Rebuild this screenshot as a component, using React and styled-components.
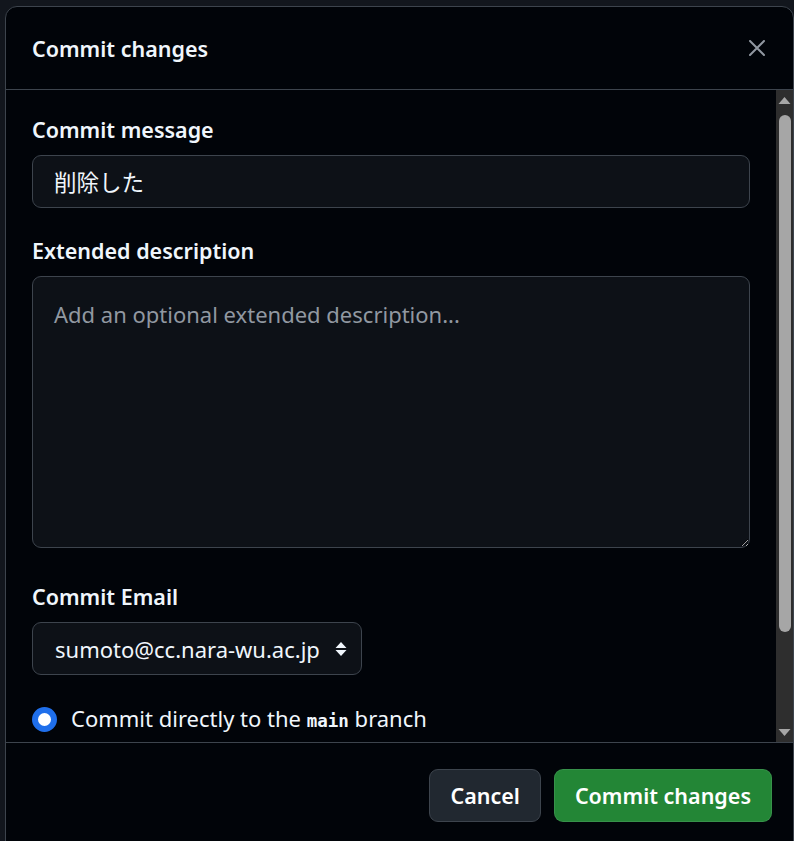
import styled, { createGlobalStyle } from 'styled-components'

const GlobalStyle = createGlobalStyle`
    html, body {
        margin: 0;
        padding: 0;
        overflow: hidden;
        background: #12161d;
        font-family: "Noto Sans", "Noto Sans CJK JP", sans-serif;
        color: #f0f6fc;
    }
`

const Page = styled.div`
    padding: 6px 0 0 5px;
    height: 841px;
    box-sizing: border-box;
`
const Dialog = styled.div`
    width: 789px;
    height: 860px;
    box-sizing: border-box;
    background: #010409;
    border: 1px solid #3d444d;
    border-radius: 12px;
    display: flex;
    flex-direction: column;
    overflow: hidden;
`
const Header = styled.div`
    height: 82px;
    flex-shrink: 0;
    display: flex;
    align-items: center;
    justify-content: space-between;
    padding: 0 22px 0 26px;
    border-bottom: 1px solid #3d444d;
`
const Title = styled.h1`
    margin: 0;
    font-size: 21.5px;
    font-weight: 600;
`
const CloseButton = styled.button`
    background: none;
    border: none;
    padding: 6px;
    cursor: pointer;
    display: flex;
`
const BodyRow = styled.div`
    height: 652px;
    flex-shrink: 0;
    display: flex;
`
const Content = styled.div`
    flex: 1;
    overflow: hidden;
    padding: 25px 26px;
    display: flex;
    flex-direction: column;
`
const ScrollTrack = styled.div`
    width: 17px;
    background: #2e2e2e;
    display: flex;
    flex-direction: column;
    align-items: center;
`
const ScrollArrow = styled.div`
    height: 20px;
    display: flex;
    align-items: center;
    justify-content: center;
    margin-top: ${props => props.bottom ? 'auto' : '0'};
`
const ScrollThumb = styled.div`
    width: 12px;
    height: 517px;
    margin-top: 5px;
    border-radius: 6px;
    background: #a6a6a6;
`
const Field = styled.div`
    display: flex;
    flex-direction: column;
    margin-bottom: ${props => props.gap || 24}px;
`
const Label = styled.label`
    font-size: 21.5px;
    font-weight: 600;
    line-height: 30px;
    margin-bottom: 10px;
`
const TextInput = styled.input`
    height: 53px;
    box-sizing: border-box;
    background: #0d1117;
    border: 1px solid #3d444d;
    border-radius: 9px;
    padding: 0 21px;
    font-family: "Noto Sans", "Noto Sans CJK JP", sans-serif;
    font-size: 22.5px;
    color: #f0f6fc;
    outline: none;
`
const TextArea = styled.textarea`
    height: 272px;
    box-sizing: border-box;
    background: #0d1117;
    border: 1px solid #3d444d;
    border-radius: 9px;
    padding: 21px 21px;
    font-family: "Noto Sans", sans-serif;
    font-size: 22px;
    line-height: 1.5;
    color: #f0f6fc;
    outline: none;
    resize: vertical;
    color-scheme: dark;
    &::placeholder {
        color: #9198a1;
    }
`
const Select = styled.div`
    align-self: flex-start;
    height: 53px;
    box-sizing: border-box;
    display: flex;
    align-items: center;
    gap: 15px;
    background: #0d1117;
    border: 1px solid #3d444d;
    border-radius: 9px;
    padding: 0 14px 0 22px;
    font-size: 22px;
`
const RadioRow = styled.label`
    display: flex;
    align-items: center;
    gap: 14px;
    font-size: 22px;
    line-height: 30px;
    flex-shrink: 0;
`
const Radio = styled.span`
    width: 25px;
    height: 25px;
    box-sizing: border-box;
    border-radius: 50%;
    flex-shrink: 0;
    background: ${props => props.checked ? '#ffffff' : 'transparent'};
    border: ${props => props.checked ? '6px solid #1f6feb' : '1px solid #9198a1'};
`
const Code = styled.code`
    font-family: "DejaVu Sans Mono", "Liberation Mono", monospace;
    font-size: 17.5px;
    font-weight: 700;
`
const Footer = styled.div`
    flex-shrink: 0;
    display: flex;
    justify-content: flex-end;
    gap: 13px;
    padding: 26px 21px;
    border-top: 1px solid #3d444d;
`
const Button = styled.button`
    height: 53px;
    padding: 0 20px;
    border-radius: 9px;
    font-family: "Noto Sans", sans-serif;
    font-size: 21.5px;
    font-weight: 600;
    color: #ffffff;
    cursor: pointer;
    background: ${props => props.primary ? '#238636' : '#212830'};
    border: 1px solid ${props => props.primary ? 'rgba(240, 246, 252, 0.1)' : '#3d444d'};
`

const CloseIcon = () => (
    <svg width="16" height="16" viewBox="0 0 16 16">
        <path d="M1 1 L15 15 M15 1 L1 15" stroke="#9198a1" strokeWidth="2" strokeLinecap="round" />
    </svg>
)

const SortIcon = () => (
    <svg width="12" height="16" viewBox="0 0 12 16">
        <path d="M6 1 L11.5 7 L0.5 7 Z M0.5 9 L11.5 9 L6 15 Z" fill="#f0f6fc" />
    </svg>
)

const ArrowIcon = ({ down }) => (
    <svg width="13" height="9" viewBox="0 0 13 9">
        <path d={down ? 'M0.5 1 L12.5 1 L6.5 8 Z' : 'M6.5 1 L12.5 8 L0.5 8 Z'} fill="#a6a6a6" />
    </svg>
)

const App = () => {
    return (
        <Page>
            <GlobalStyle />
            <Dialog>
                <Header>
                    <Title>Commit changes</Title>
                    <CloseButton aria-label="Close"><CloseIcon /></CloseButton>
                </Header>
                <BodyRow>
                    <Content>
                        <Field gap={28}>
                            <Label>Commit message</Label>
                            <TextInput defaultValue="削除した" />
                        </Field>
                        <Field gap={34}>
                            <Label>Extended description</Label>
                            <TextArea placeholder="Add an optional extended description..." />
                        </Field>
                        <Field gap={28}>
                            <Label>Commit Email</Label>
                            <Select>
                                <span>sumoto@cc.nara-wu.ac.jp</span>
                                <SortIcon />
                            </Select>
                        </Field>
                        <RadioRow>
                            <Radio checked />
                            <span>Commit directly to the <Code>main</Code> branch</span>
                        </RadioRow>
                    </Content>
                    <ScrollTrack>
                        <ScrollArrow><ArrowIcon /></ScrollArrow>
                        <ScrollThumb />
                        <ScrollArrow bottom><ArrowIcon down /></ScrollArrow>
                    </ScrollTrack>
                </BodyRow>
                <Footer>
                    <Button>Cancel</Button>
                    <Button primary>Commit changes</Button>
                </Footer>
            </Dialog>
        </Page>
    )
}

export default App
